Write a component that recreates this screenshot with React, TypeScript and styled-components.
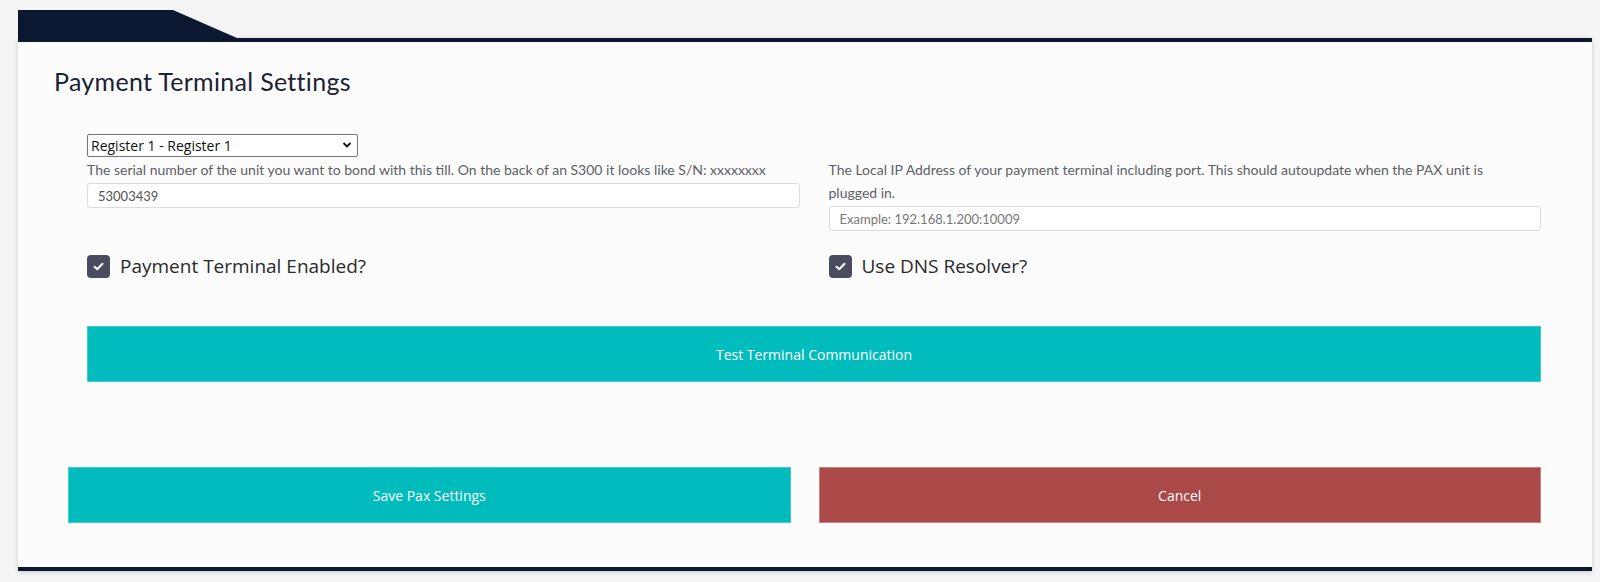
import styled, { createGlobalStyle } from "styled-components";

const GlobalStyle = createGlobalStyle`
  html, body {
    margin: 0;
    padding: 0;
    background: #f4f4f4;
  }
  * {
    box-sizing: border-box;
  }
`;

const NAVY = "#0c1830";
const TEAL = "#00bcbc";

const Page = styled.div`
  padding: 10px 8px 11px 18px;
`;

const Tab = styled.div`
  width: 219px;
  height: 28px;
  background: ${NAVY};
  clip-path: polygon(0 0, 155px 0, 100% 100%, 0 100%);
`;

const Card = styled.div`
  background: #fcfcfc;
  border-top: 4px solid ${NAVY};
  border-bottom: 4px solid ${NAVY};
  box-shadow: 0 1px 4px rgba(0, 0, 0, 0.18);
  padding: 25px 0 44px;
`;

const Title = styled.h2`
  margin: 0 0 38px 36px;
  font-family: Lato, "Liberation Sans", sans-serif;
  font-weight: 400;
  font-size: 25px;
  letter-spacing: 0.3px;
  line-height: 29px;
  color: #1b2233;
`;

const FormArea = styled.div`
  margin: 0 51px 0 69px;
`;

const FieldRow = styled.div`
  display: grid;
  grid-template-columns: 1fr 1fr;
  column-gap: 29px;
  align-items: start;
`;

const Column = styled.div`
  display: flex;
  flex-direction: column;
`;

const SelectWrap = styled.div`
  position: relative;
  width: 271px;
  height: 23px;
`;

const Select = styled.select`
  appearance: none;
  width: 100%;
  height: 100%;
  border: 1px solid #767676;
  border-radius: 2px;
  background: #fff;
  padding: 0 24px 0 3px;
  font-family: "Open Sans", "Liberation Sans", sans-serif;
  font-size: 14px;
  color: #111;
`;

const Chevron = styled.svg`
  position: absolute;
  right: 6px;
  top: 7px;
  pointer-events: none;
`;

const Spacer = styled.div<{ $h: number }>`
  height: ${(p) => p.$h}px;
`;

const Help = styled.div`
  margin-top: 1px;
  max-width: 700px;
  font-family: Lato, "Liberation Sans", sans-serif;
  font-size: 14px;
  line-height: 23px;
  color: #5c5f66;
`;

const Input = styled.input`
  margin-top: 2px;
  width: 100%;
  height: 25px;
  border: 1px solid #dcdcdc;
  border-radius: 3px;
  background: #fff;
  padding: 0 10px;
  font-family: Lato, "Liberation Sans", sans-serif;
  font-size: 13px;
  color: #555;
  &::placeholder {
    color: #777;
  }
`;

const CheckRow = styled.div`
  display: grid;
  grid-template-columns: 1fr 1fr;
  column-gap: 29px;
  margin-top: 24px;
`;

const CheckLabel = styled.label`
  display: flex;
  align-items: center;
  gap: 10px;
  height: 23px;
  font-family: "Open Sans", "Liberation Sans", sans-serif;
  font-size: 19px;
  line-height: 23px;
  color: #2a2a2a;
`;

const Box = styled.span`
  width: 23px;
  height: 23px;
  border-radius: 4px;
  background: #4a4d5f;
  display: flex;
  align-items: center;
  justify-content: center;
  flex: none;
`;

const Button = styled.button<{ $variant?: "primary" | "danger" }>`
  display: block;
  width: 100%;
  height: 56px;
  border: 1px solid
    ${(p) => (p.$variant === "danger" ? "#d07e7e" : "#3fcccc")};
  background: ${(p) => (p.$variant === "danger" ? "#ab4848" : TEAL)};
  color: #fff;
  font-family: "Open Sans", "Liberation Sans", sans-serif;
  font-size: 14px;
  font-weight: 500;
  cursor: pointer;
`;

const TestWrap = styled.div`
  margin-top: 48px;
`;

const ActionRow = styled.div`
  display: grid;
  grid-template-columns: 1fr 1fr;
  column-gap: 28px;
  margin: 85px 51px 0 50px;
`;

function Check({ label }: { label: string }) {
  return (
    <CheckLabel>
      <Box>
        <svg width="11" height="9" viewBox="0 0 11 9">
          <path
            d="M1.5 4.8 L4.2 7.3 L9.5 1.7"
            fill="none"
            stroke="#fff"
            strokeWidth="2"
            strokeLinecap="round"
            strokeLinejoin="round"
          />
        </svg>
      </Box>
      {label}
    </CheckLabel>
  );
}

export default function App() {
  return (
    <Page>
      <GlobalStyle />
      <Tab />
      <Card>
        <Title>Payment Terminal Settings</Title>
        <FormArea>
          <FieldRow>
            <Column>
              <SelectWrap>
                <Select defaultValue="1">
                  <option value="1">Register 1 - Register 1</option>
                </Select>
                <Chevron width="10" height="8" viewBox="0 0 10 8">
                  <path
                    d="M1.5 2 L5 5.5 L8.5 2"
                    fill="none"
                    stroke="#111"
                    strokeWidth="1.8"
                  />
                </Chevron>
              </SelectWrap>
              <Help>
                The serial number of the unit you want to bond with this till.
                On the back of an S300 it looks like S/N: xxxxxxxx
              </Help>
              <Input defaultValue="53003439" />
            </Column>
            <Column>
              <Spacer $h={23} />
              <Help>
                The Local IP Address of your payment terminal including port.
                This should autoupdate when the PAX unit is plugged in.
              </Help>
              <Input placeholder="Example: 192.168.1.200:10009" />
            </Column>
          </FieldRow>
          <CheckRow>
            <Check label="Payment Terminal Enabled?" />
            <Check label="Use DNS Resolver?" />
          </CheckRow>
          <TestWrap>
            <Button $variant="primary">Test Terminal Communication</Button>
          </TestWrap>
        </FormArea>
        <ActionRow>
          <Button $variant="primary">Save Pax Settings</Button>
          <Button $variant="danger">Cancel</Button>
        </ActionRow>
      </Card>
    </Page>
  );
}
